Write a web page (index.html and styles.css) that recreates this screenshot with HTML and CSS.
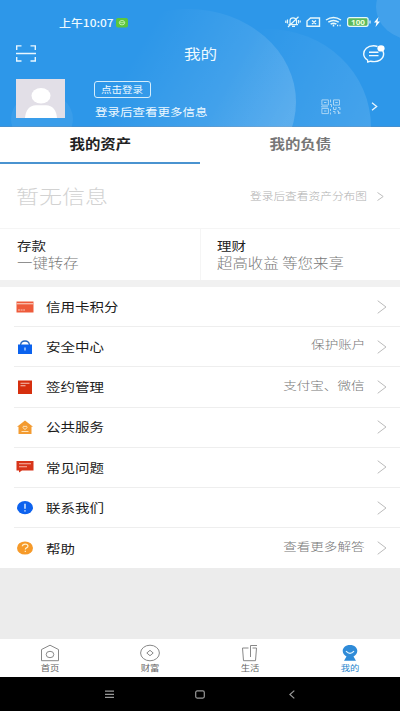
FILE: index.html
```html
<!DOCTYPE html>
<html lang="zh-CN">
<head>
<meta charset="utf-8">
<title>我的</title>
<link rel="stylesheet" href="styles.css">
</head>
<body>
<div class="app">
  <header class="header">
    <svg class="header-bg" width="400" height="127" viewBox="0 0 400 127">
      <defs>
        <linearGradient id="g1" x1="0" y1="0" x2="1" y2=".5"><stop offset=".3" stop-color="#fff" stop-opacity="0"/><stop offset="1" stop-color="#fff" stop-opacity=".17"/></linearGradient>
        <linearGradient id="g2" x1="0" y1="0" x2="1" y2=".5"><stop offset=".35" stop-color="#fff" stop-opacity="0"/><stop offset="1" stop-color="#fff" stop-opacity=".12"/></linearGradient>
      </defs>
      <ellipse cx="268" cy="127" rx="103" ry="98" fill="url(#g2)"/>
      <ellipse cx="188" cy="102" rx="108" ry="93" fill="url(#g1)"/>
      <ellipse cx="414" cy="7" rx="38" ry="33" fill="#fff" opacity=".1"/>
      <ellipse cx="42" cy="119" rx="31" ry="27" fill="#fff" opacity=".06"/>
    </svg>
    <div class="status">
      <span class="tx time">上午10:07</span>
      <svg class="badge" width="12" height="10" viewBox="0 0 12 10"><rect width="12" height="9.5" rx="2" fill="#5cc63c"/><ellipse cx="6" cy="4.7" rx="2.7" ry="2.2" fill="none" stroke="#c8f3b8" stroke-width=".9"/><path d="M3.5 4.7h5" stroke="#c8f3b8" stroke-width=".8"/></svg>
      <svg class="indicators" width="98" height="14" viewBox="0 0 98 14" fill="none" stroke="#e6f8fb" stroke-width="1.2">
        <path d="M3.500 9.600h9.500M5 9V5.500Q5.200 2.800 8 2.800T11.500 5.500V9M7 11.400h3M3 12L13.500 1.800M.8 5.500v2.500M2.500 4.500v4M13.500 5v3.500M15.200 5.500v2"/>
        <path d="M25.500 3H34.500V11.200H22V6zM27 5.400l4 3.600M31 5.400l-4 3.600" stroke-width="1.400"/>
        <path d="M41 5Q48.500 0 56 5M43.300 7.200Q48.500 3.600 53.700 7.200M45.600 9.200Q48.500 7.200 51.400 9.200" stroke-width="1.500"/><path d="M48.500 9.500v2M52 10.500h1.200M54.500 10.500h1.200" stroke-width="1.500"/>
        <rect x="62.600" y="2.700" width="20.500" height="8.600" rx="2" fill="#5ab85d"/><path d="M85 5.500v3"/>
        <path d="M93.500 2L89 7.400h2.500L90.500 12L95 6.400h-2.500z" fill="#fff" stroke="none"/>
        <text x="66" y="9.700" class="battery" textLength="14" lengthAdjust="spacingAndGlyphs">100</text>
      </svg>
    </div>
    <div class="titlebar">
      <svg width="20" height="17" viewBox="0 0 20 17" fill="none" stroke="#e9f7ff" stroke-width="1.400"><path d="M.7 5V.9H5.500M14.500.9h4.800V5M.7 12v4H5.500M14.500 16h4.800v-4M0 8.500h20"/></svg>
      <h1 class="tx">我的</h1>
      <svg width="22" height="18" viewBox="0 0 22 18" fill="none" stroke="#f1fbff" stroke-width="1.400"><path d="M14.500 1.500Q12.500.8 10.500.8C4.500.8.700 4.500.700 9Q.7 12.500 4.500 15L4.800 17L7.500 16.200C15 18 21 14 20.600 8.500Q20.500 7 19.800 5.800"/><path d="M6 7.200h9.500M6 10.600h9.500"/><ellipse cx="18" cy="3.400" rx="3.600" ry="3.100" fill="#fff" stroke="none"/></svg>
    </div>
    <div class="profile">
      <svg class="avatar" width="49" height="39" viewBox="0 0 49 39"><rect width="49" height="39" fill="#e2dfe7"/><ellipse cx="25" cy="16.800" rx="9.500" ry="7.800" fill="#fff"/><path d="M9 39Q10 27 20 26.300H30Q40 27 41 39z" fill="#fff"/></svg>
      <div class="login">
        <span class="login-btn"><span class="tx">点击登录</span></span>
        <span class="tx hint">登录后查看更多信息</span>
      </div>
      <svg class="qr" width="20" height="16" viewBox="0 0 20 16" fill="none" stroke="#a9d5f5"><path d="M.9.900h6.500v5.200h-6.500zM12.500.900h6v5.200h-6zM.9 9.400h6.500v5.200h-6.500zM3 3.500h2.500M14.300 3.500h2.500M3 12h2.500M9.500.5v3M9 5.500h1.500v2.500M0 7.800h7M12.500 8v2.500h2.500V8M17 8.500h2v2.500M12 12.500h2v2.500M16 12h1.500v3M18.800 13v2M9.500 10v2M9.500 13.500v2"/></svg>
      <svg class="go" width="7" height="9" viewBox="0 0 7 9" fill="none" stroke="#e8f6ff" stroke-width="1.300"><path d="M1 .7L5.700 4.500L1 8.300"/></svg>
    </div>
  </header>

  <nav class="tabs"><div class="tab active"><span class="tx">我的资产</span></div><div class="tab"><span class="tx">我的负债</span></div></nav>

  <section class="assets">
    <span class="tx empty">暂无信息</span>
    <span class="tx more">登录后查看资产分布图</span>
    <svg width="7" height="9" viewBox="0 0 7 9" fill="none" stroke="#bdbdbd"><path d="M.5.500L6.200 4.500L.5 8.500"/></svg>
  </section>

  <section class="quick">
    <div class="card"><span class="tx name">存款</span><span class="tx desc">一键转存</span></div>
    <div class="card"><span class="tx name">理财</span><span class="tx desc">超高收益 等您来享</span></div>
  </section>

  <ul class="menu">
    <li><svg class="ic" viewBox="0 0 18 16"><path d="M.5 2.500h17v11H.5z" fill="#ee5b3b"/><path d="M.5 4.700h17" stroke="#f9c0ae" stroke-width="1.300"/><path d="M2 11h7" stroke="#f8c5b8" stroke-width="1" stroke-dasharray="2 .6"/></svg><span class="tx label">信用卡积分</span><svg class="chev" viewBox="0 0 10 14"><path d="M.7.700L9 7L.7 13.300"/></svg></li>
    <li><svg class="ic" viewBox="0 0 18 16"><path d="M2 5.500h14v9.500H2z" fill="#0b62ee"/><path d="M4.500 6Q5 2 9 2T13.500 6" fill="none" stroke="#2867bd" stroke-width="1.300"/><path d="M9 8.500v3" stroke="#d9e9ff" stroke-width="1.200"/></svg><span class="tx label">安全中心</span><span class="tx note">保护账户</span><svg class="chev" viewBox="0 0 10 14"><path d="M.7.700L9 7L.7 13.300"/></svg></li>
    <li><svg class="ic" viewBox="0 0 18 16"><path d="M2 1.500h14v13.500H2z" fill="#d62f0e"/><path d="M4.500 4.200h9M4.500 6.800h5" stroke="#f7c6b8" stroke-width="1.100"/></svg><span class="tx label">签约管理</span><span class="tx note">支付宝、微信</span><svg class="chev" viewBox="0 0 10 14"><path d="M.7.700L9 7L.7 13.300"/></svg></li>
    <li><svg class="ic" viewBox="0 0 18 16"><path d="M9 1.500L17 7.700H15.500V15H2.500V7.700H1z" fill="#f39b31"/><path d="M9 10.500L6.800 8.500Q7.300 6.200 9 7.500Q10.700 6.200 11.200 8.500zM5.500 12.500h7" fill="none" stroke="#ffe2b8" stroke-width="1"/></svg><span class="tx label">公共服务</span><svg class="chev" viewBox="0 0 10 14"><path d="M.7.700L9 7L.7 13.300"/></svg></li>
    <li><svg class="ic" viewBox="0 0 18 16"><path d="M.5 2h17v9.500H6L3 13.500V11.500H.5z" fill="#d8351a"/><path d="M3 4.800h12M3 7.700h8" stroke="#f7b9aa" stroke-width="1.100"/></svg><span class="tx label">常见问题</span><svg class="chev" viewBox="0 0 10 14"><path d="M.7.700L9 7L.7 13.300"/></svg></li>
    <li><svg class="ic" viewBox="0 0 18 16"><ellipse cx="9" cy="7.700" rx="8" ry="6.600" fill="#0d62ee"/><path d="M9 3.700v5M9 10.300v1.300" stroke="#e6f1ff" stroke-width="1.400"/></svg><span class="tx label">联系我们</span><svg class="chev" viewBox="0 0 10 14"><path d="M.7.700L9 7L.7 13.300"/></svg></li>
    <li><svg class="ic" viewBox="0 0 18 16"><ellipse cx="9" cy="8" rx="8" ry="6.600" fill="#f69a29"/><path d="M6.300 6.300Q6.500 4.100 9.200 4.100T12 6.100Q12 7.300 10.400 7.900Q9.300 8.400 9.300 9.600M9.300 10.700v1.300" fill="none" stroke="#fff0cf" stroke-width="1.200"/></svg><span class="tx label">帮助</span><span class="tx note">查看更多解答</span><svg class="chev" viewBox="0 0 10 14"><path d="M.7.700L9 7L.7 13.300"/></svg></li>
  </ul>

  <nav class="bottom">
    <div class="item"><svg viewBox="0 0 20 18"><path d="M1.500 5.500L10 1.200L18.500 5.500V16.700H1.500z"/><ellipse cx="10" cy="10.500" rx="3.800" ry="3.200"/></svg><span class="tx">首页</span></div>
    <div class="item"><svg viewBox="0 0 20 18"><ellipse cx="10" cy="9" rx="9.400" ry="7.800"/><path d="M10 6.300L13.200 9L10 11.700L6.800 9z"/></svg><span class="tx">财富</span></div>
    <div class="item"><svg viewBox="0 0 20 18"><path d="M8.500 4H2.500L3.500 16.700H15.500L16.500 4H12.500M10.500 13V1.500H17"/></svg><span class="tx">生活</span></div>
    <div class="item on"><svg viewBox="0 0 20 18"><path d="M10 1C14.500 1 17.300 3.700 17.300 7C17.300 9.500 15.500 11.500 13.500 12.500L16 16.700H4L6.500 12.500C4.500 11.500 2.700 9.500 2.700 7C2.700 3.700 5.500 1 10 1z" fill="#2f8bd8" stroke="none"/><path d="M6 7.200Q10 11.700 14 7.200" stroke="#e3f5ff" stroke-width="1.200"/></svg><span class="tx">我的</span></div>
  </nav>
  <div class="system">
    <svg width="9" height="9" viewBox="0 0 9 9"><path d="M0 1.200h9M0 4.300h9M0 7.400h9"/></svg>
    <svg width="10" height="9" viewBox="0 0 10 9"><rect x=".7" y=".9" width="8.600" height="7.200" rx="1.500"/></svg>
    <svg width="6" height="9" viewBox="0 0 6 9"><path d="M5.300.6L.9 4.500L5.300 8.400"/></svg>
  </div>
</div>
</body>
</html>
```
FILE: styles.css
```css
* { box-sizing: border-box; }
body { margin: 0; background: #ececec; font-family: "Noto Sans CJK SC", sans-serif; font-size: 12.4px; line-height: 1; }
svg { display: block; flex: none; }
.app { width: 400px; height: 711px; display: flex; flex-direction: column; overflow: hidden; }

/* Wide letterforms used across the interface */
.tx { display: block; white-space: nowrap; transform: scaleX(1.17); transform-origin: left center; }

.header { position: relative; height: 127px; flex: none; background: #2d97e9; color: #eef9ff; border-bottom: 1px solid #448fcf; }
.header-bg { position: absolute; left: 0; top: 0; }
.status { position: relative; height: 28px; padding: 16px 0 0 59px; display: flex; align-items: center; }
.time { width: 57px; margin-top: 2px; font-size: 10.200px; font-weight: 500; }
.badge { margin-top: 1px; }
.indicators { margin: 0 17px 0 auto; }
.battery { font: 700 7px "Noto Sans", sans-serif; fill: #eaffd9; stroke: none; }
.titlebar { position: relative; height: 51px; padding: 0 15px 0 16px; display: flex; align-items: center; justify-content: space-between; }
h1 { margin: 0 0 0 -2px; font-size: 14.2px; font-weight: 400; transform-origin: center; }
.profile { position: relative; height: 39px; display: flex; padding-left: 16px; }
.login { margin-left: 29px; padding-top: 2px; width: 200px; }
.login-btn { display: block; width: 57px; height: 17px; border: 1px solid #d4edfc; border-radius: 3px; padding: 3px 0 0 6px; font-size: 9px; }
.hint { margin: 9px 0 0 1px; font-size: 10.700px; }
.qr { margin: 20px 0 0 27px; }
.go { margin: 23px 0 0 30px; }

.tabs { height: 37px; flex: none; display: flex; background: #fff; }
.tab { flex: 1; display: flex; justify-content: center; padding-top: 10px; font-size: 13.2px; font-weight: 700; color: #777; }
.tab .tx { transform-origin: center; }
.tab.active { color: #222; border-bottom: 2px solid #4a93d0; }

.assets { height: 65px; flex: none; display: flex; align-items: center; background: #fff; padding: 0 16px; border-bottom: 1px solid #f5f5f5; }
.empty { font-size: 19.700px; font-weight: 300; color: #d2d2d2; margin-top: -1px; }
.more { margin-left: auto; margin-right: 10px; font-size: 10px; font-weight: 300; color: #b0b0b0; transform-origin: right center; }

.quick { height: 51px; flex: none; display: flex; background: #fff; }
.card { flex: 1; padding: 11px 0 0 17px; }
.card + .card { border-left: 1px solid #f5f5f5; padding-left: 16px; }
.name { color: #222; }
.desc { margin-top: 4px; font-size: 13.200px; font-weight: 300; color: #777; }

.menu { list-style: none; margin: 0; padding: 0; border-top: 7px solid #f1f1f1; background: #fff; flex: none; }
.menu li { height: 40.200px; display: flex; align-items: center; margin-left: 14px; padding: 0 13px 0 2px; border-bottom: 1px solid #eee; }
.menu li:last-child { border-bottom: 0; }
.ic { width: 18px; height: 16px; }
.label { margin: 1px 0 0 12px; color: #1c1c1c; }
.note { margin: -3px 12px 0 auto; font-size: 11.600px; font-weight: 300; color: #777; transform-origin: right center; }
.chev { width: 10px; height: 14px; margin-left: auto; fill: none; stroke: #bbb; }
.note + .chev { margin-left: 0; }

.bottom { margin-top: auto; height: 38px; flex: none; background: #fff; display: flex; }
.item { flex: 1; display: flex; flex-direction: column; align-items: center; padding-top: 5px; font-size: 8px; color: #666; }
.item svg { width: 20px; height: 18px; fill: none; stroke: #888; }
.item .tx { margin-top: 2px; transform-origin: center; }
.item.on { color: #2584cc; }
.system { height: 34px; flex: none; background: #000; display: flex; align-items: center; justify-content: space-between; padding: 0 105px; }
.system svg { fill: none; stroke: #999; stroke-width: 1.200; }
.system svg:nth-child(2) { margin-left: -3px; }
```
